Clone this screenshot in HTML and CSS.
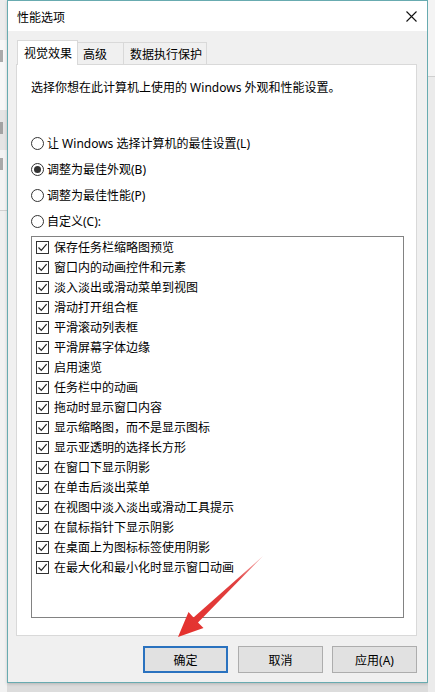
FILE: index.html
```html
<!DOCTYPE html>
<html lang="zh-CN">
<head>
<meta charset="utf-8">
<title>性能选项</title>
<link rel="stylesheet" href="styles.css">
</head>
<body>
<div class="screen">
  <div class="side-left">
    <div class="band b1"></div>
    <div class="band b2"><i class="mark"></i></div>
    <div class="band b3"><i class="mark"></i></div>
    <div class="band b4"><i class="mark"></i></div>
    <div class="band b5"></div>
  </div>
  <div class="dialog">
    <div class="titlebar">
      <span class="title">性能选项</span>
      <svg class="close" width="11" height="11" viewBox="0 0 11 11"><path d="M0.5 0.5 L10.5 10.5 M10.5 0.5 L0.5 10.5" stroke="#111" stroke-width="1.1" fill="none"/></svg>
    </div>
    <div class="body">
      <div class="tabs">
        <div class="tab active">视觉效果</div>
        <div class="tab t2">高级</div>
        <div class="tab t3">数据执行保护</div>
      </div>
      <div class="panel">
        <p class="desc">选择你想在此计算机上使用的 Windows 外观和性能设置。</p>
        <div class="radios">
          <div class="radio-row"><span class="radio"></span><span>让 Windows 选择计算机的最佳设置(L)</span></div>
          <div class="radio-row"><span class="radio on"></span><span>调整为最佳外观(B)</span></div>
          <div class="radio-row"><span class="radio"></span><span>调整为最佳性能(P)</span></div>
          <div class="radio-row"><span class="radio"></span><span>自定义(C):</span></div>
        </div>
        <div class="list">
          <div class="item"><span class="check"><svg width="11" height="11" viewBox="0 0 11 11"><path d="M1.5 5.5 L4.3 8.3 L9.6 2.2" stroke="#222" stroke-width="1.2" fill="none"/></svg></span><span>保存任务栏缩略图预览</span></div>
          <div class="item"><span class="check"><svg width="11" height="11" viewBox="0 0 11 11"><path d="M1.5 5.5 L4.3 8.3 L9.6 2.2" stroke="#222" stroke-width="1.2" fill="none"/></svg></span><span>窗口内的动画控件和元素</span></div>
          <div class="item"><span class="check"><svg width="11" height="11" viewBox="0 0 11 11"><path d="M1.5 5.5 L4.3 8.3 L9.6 2.2" stroke="#222" stroke-width="1.2" fill="none"/></svg></span><span>淡入淡出或滑动菜单到视图</span></div>
          <div class="item"><span class="check"><svg width="11" height="11" viewBox="0 0 11 11"><path d="M1.5 5.5 L4.3 8.3 L9.6 2.2" stroke="#222" stroke-width="1.2" fill="none"/></svg></span><span>滑动打开组合框</span></div>
          <div class="item"><span class="check"><svg width="11" height="11" viewBox="0 0 11 11"><path d="M1.5 5.5 L4.3 8.3 L9.6 2.2" stroke="#222" stroke-width="1.2" fill="none"/></svg></span><span>平滑滚动列表框</span></div>
          <div class="item"><span class="check"><svg width="11" height="11" viewBox="0 0 11 11"><path d="M1.5 5.5 L4.3 8.3 L9.6 2.2" stroke="#222" stroke-width="1.2" fill="none"/></svg></span><span>平滑屏幕字体边缘</span></div>
          <div class="item"><span class="check"><svg width="11" height="11" viewBox="0 0 11 11"><path d="M1.5 5.5 L4.3 8.3 L9.6 2.2" stroke="#222" stroke-width="1.2" fill="none"/></svg></span><span>启用速览</span></div>
          <div class="item"><span class="check"><svg width="11" height="11" viewBox="0 0 11 11"><path d="M1.5 5.5 L4.3 8.3 L9.6 2.2" stroke="#222" stroke-width="1.2" fill="none"/></svg></span><span>任务栏中的动画</span></div>
          <div class="item"><span class="check"><svg width="11" height="11" viewBox="0 0 11 11"><path d="M1.5 5.5 L4.3 8.3 L9.6 2.2" stroke="#222" stroke-width="1.2" fill="none"/></svg></span><span>拖动时显示窗口内容</span></div>
          <div class="item"><span class="check"><svg width="11" height="11" viewBox="0 0 11 11"><path d="M1.5 5.5 L4.3 8.3 L9.6 2.2" stroke="#222" stroke-width="1.2" fill="none"/></svg></span><span>显示缩略图，而不是显示图标</span></div>
          <div class="item"><span class="check"><svg width="11" height="11" viewBox="0 0 11 11"><path d="M1.5 5.5 L4.3 8.3 L9.6 2.2" stroke="#222" stroke-width="1.2" fill="none"/></svg></span><span>显示亚透明的选择长方形</span></div>
          <div class="item"><span class="check"><svg width="11" height="11" viewBox="0 0 11 11"><path d="M1.5 5.5 L4.3 8.3 L9.6 2.2" stroke="#222" stroke-width="1.2" fill="none"/></svg></span><span>在窗口下显示阴影</span></div>
          <div class="item"><span class="check"><svg width="11" height="11" viewBox="0 0 11 11"><path d="M1.5 5.5 L4.3 8.3 L9.6 2.2" stroke="#222" stroke-width="1.2" fill="none"/></svg></span><span>在单击后淡出菜单</span></div>
          <div class="item"><span class="check"><svg width="11" height="11" viewBox="0 0 11 11"><path d="M1.5 5.5 L4.3 8.3 L9.6 2.2" stroke="#222" stroke-width="1.2" fill="none"/></svg></span><span>在视图中淡入淡出或滑动工具提示</span></div>
          <div class="item"><span class="check"><svg width="11" height="11" viewBox="0 0 11 11"><path d="M1.5 5.5 L4.3 8.3 L9.6 2.2" stroke="#222" stroke-width="1.2" fill="none"/></svg></span><span>在鼠标指针下显示阴影</span></div>
          <div class="item"><span class="check"><svg width="11" height="11" viewBox="0 0 11 11"><path d="M1.5 5.5 L4.3 8.3 L9.6 2.2" stroke="#222" stroke-width="1.2" fill="none"/></svg></span><span>在桌面上为图标标签使用阴影</span></div>
          <div class="item"><span class="check"><svg width="11" height="11" viewBox="0 0 11 11"><path d="M1.5 5.5 L4.3 8.3 L9.6 2.2" stroke="#222" stroke-width="1.2" fill="none"/></svg></span><span>在最大化和最小化时显示窗口动画</span></div>
        </div>
      </div>
      <div class="buttons">
        <button class="btn default">确定</button>
        <button class="btn">取消</button>
        <button class="btn">应用(A)</button>
      </div>
    </div>
  </div>
  <div class="side-right">
    <div class="rband"></div>
  </div>
</div>
<svg class="arrow" width="435" height="692" viewBox="0 0 435 692">
  <defs>
    <linearGradient id="ag" x1="263" y1="556" x2="178" y2="637" gradientUnits="userSpaceOnUse">
      <stop offset="0" stop-color="#f07a7a" stop-opacity="0.6"/>
      <stop offset="0.3" stop-color="#e04040"/>
      <stop offset="1" stop-color="#e5302c"/>
    </linearGradient>
  </defs>
  <polygon points="263,556 198,622.5 203.5,628 178,637 188.5,612 193.5,617.5" fill="url(#ag)"/>
</svg>
</body>
</html>
```
FILE: styles.css
```css
html, body {
  margin: 0;
  padding: 0;
}
body {
  width: 435px;
  height: 692px;
  overflow: hidden;
  background: #dcdcdc;
  font-family: "Noto Sans", "Noto Sans CJK SC", sans-serif;
  font-size: 12px;
  color: #000;
  position: relative;
}
.screen {
  display: flex;
  height: 692px;
  align-items: flex-start;
}
.side-left {
  width: 7px;
  height: 692px;
  background: #f2f2f2;
  display: flex;
  flex-direction: column;
  overflow: hidden;
}
.band {
  box-sizing: border-box;
  overflow: hidden;
}
.mark {
  display: block;
  width: 3px;
  height: 12px;
  background: #777;
  opacity: 0.6;
}
.b1 { height: 40px; background: #ececec; }
.b2 { height: 70px; background: #f7f7f7; padding-top: 10px; }
.b3 { height: 40px; background: #e4e4e4; padding-top: 12px; }
.b4 { height: 60px; background: #f3f3f3; padding-top: 8px; }
.b5 { height: 100px; background: #efefef; border-top: 1px solid #d0d0d0; }
.side-right {
  flex: 1;
  height: 692px;
  background: #ebebeb;
  display: flex;
  flex-direction: column;
}
.rband {
  height: 76px;
  background: #f4f4f4;
  border-bottom: 1px solid #cfcfcf;
}
.dialog {
  width: 419px;
  height: 681px;
  border: 1px solid #68abb0;
  background: #f0f0f0;
  display: flex;
  flex-direction: column;
  box-shadow: 0 1px 3px rgba(0,0,0,0.18);
}
.titlebar {
  height: 30px;
  background: #fff;
  display: flex;
  align-items: center;
  justify-content: space-between;
  padding-left: 9px;
  padding-right: 10px;
}
.title {
  font-family: "Noto Sans CJK SC", sans-serif;
  font-size: 12px;
  line-height: 16px;
  margin-top: 1px;
}
.close { display: block; }
.body {
  flex: 1;
  display: flex;
  flex-direction: column;
  padding: 9px 10px 9px 8px;
}
.tabs {
  display: flex;
  align-items: flex-end;
  height: 24px;
  padding-left: 1px;
}
.tab {
  box-sizing: border-box;
  height: 22px;
  border: 1px solid #d9d9d9;
  border-bottom: 0;
  background: #f0f0f0;
  line-height: 21px;
  font-family: "Noto Sans CJK SC", sans-serif;
  white-space: nowrap;
}
.tab.active {
  position: relative;
  z-index: 2;
  height: 25px;
  margin-bottom: -1px;
  background: #fff;
  width: 61px;
  padding-left: 6px;
  line-height: 24px;
}
.t2 { width: 46px; padding-left: 5px; border-left: 0; }
.t3 { width: 83px; padding-left: 6px; border-left: 0; }
.panel {
  box-sizing: border-box;
  height: 572px;
  background: #fff;
  border: 1px solid #d9d9d9;
  padding: 13px 0 0 14px;
  position: relative;
  z-index: 1;
}
.desc {
  margin: 0;
  line-height: 20px;
  height: 20px;
  white-space: nowrap;
}
.radios {
  margin-top: 35px;
  display: flex;
  flex-direction: column;
  gap: 6px;
}
.radio-row {
  display: flex;
  align-items: center;
  height: 20px;
  gap: 3px;
  white-space: nowrap;
}
.radio {
  box-sizing: border-box;
  width: 13px;
  height: 13px;
  border: 1px solid #333;
  border-radius: 50%;
  background: #fff;
  display: flex;
  align-items: center;
  justify-content: center;
}
.radio.on::after {
  content: "";
  width: 7px;
  height: 7px;
  border-radius: 50%;
  background: #333;
}
.list {
  box-sizing: border-box;
  margin-top: 5px;
  width: 373px;
  height: 382px;
  border: 1px solid #828282;
  padding: 0 0 0 4px;
}
.item {
  display: flex;
  align-items: center;
  height: 20px;
  gap: 5px;
  white-space: nowrap;
}
.check {
  box-sizing: border-box;
  width: 13px;
  height: 13px;
  border: 1px solid #333;
  background: #fff;
  display: flex;
  align-items: center;
  justify-content: center;
}
.check svg { display: block; }
.buttons {
  display: flex;
  justify-content: flex-end;
  gap: 10px;
  margin-top: 10px;
}
.btn {
  box-sizing: border-box;
  width: 85px;
  height: 27px;
  margin: 0;
  padding: 0;
  background: #e1e1e1;
  border: 1px solid #adadad;
  font-family: "Noto Sans", "Noto Sans CJK SC", sans-serif;
  font-size: 12px;
  color: #000;
}
.btn:nth-child(3) { margin-left: -1px; }
.btn.default {
  border: 2px solid #2a72bf;
}
.arrow {
  position: absolute;
  left: 0;
  top: 0;
  z-index: 10;
  pointer-events: none;
}
```
